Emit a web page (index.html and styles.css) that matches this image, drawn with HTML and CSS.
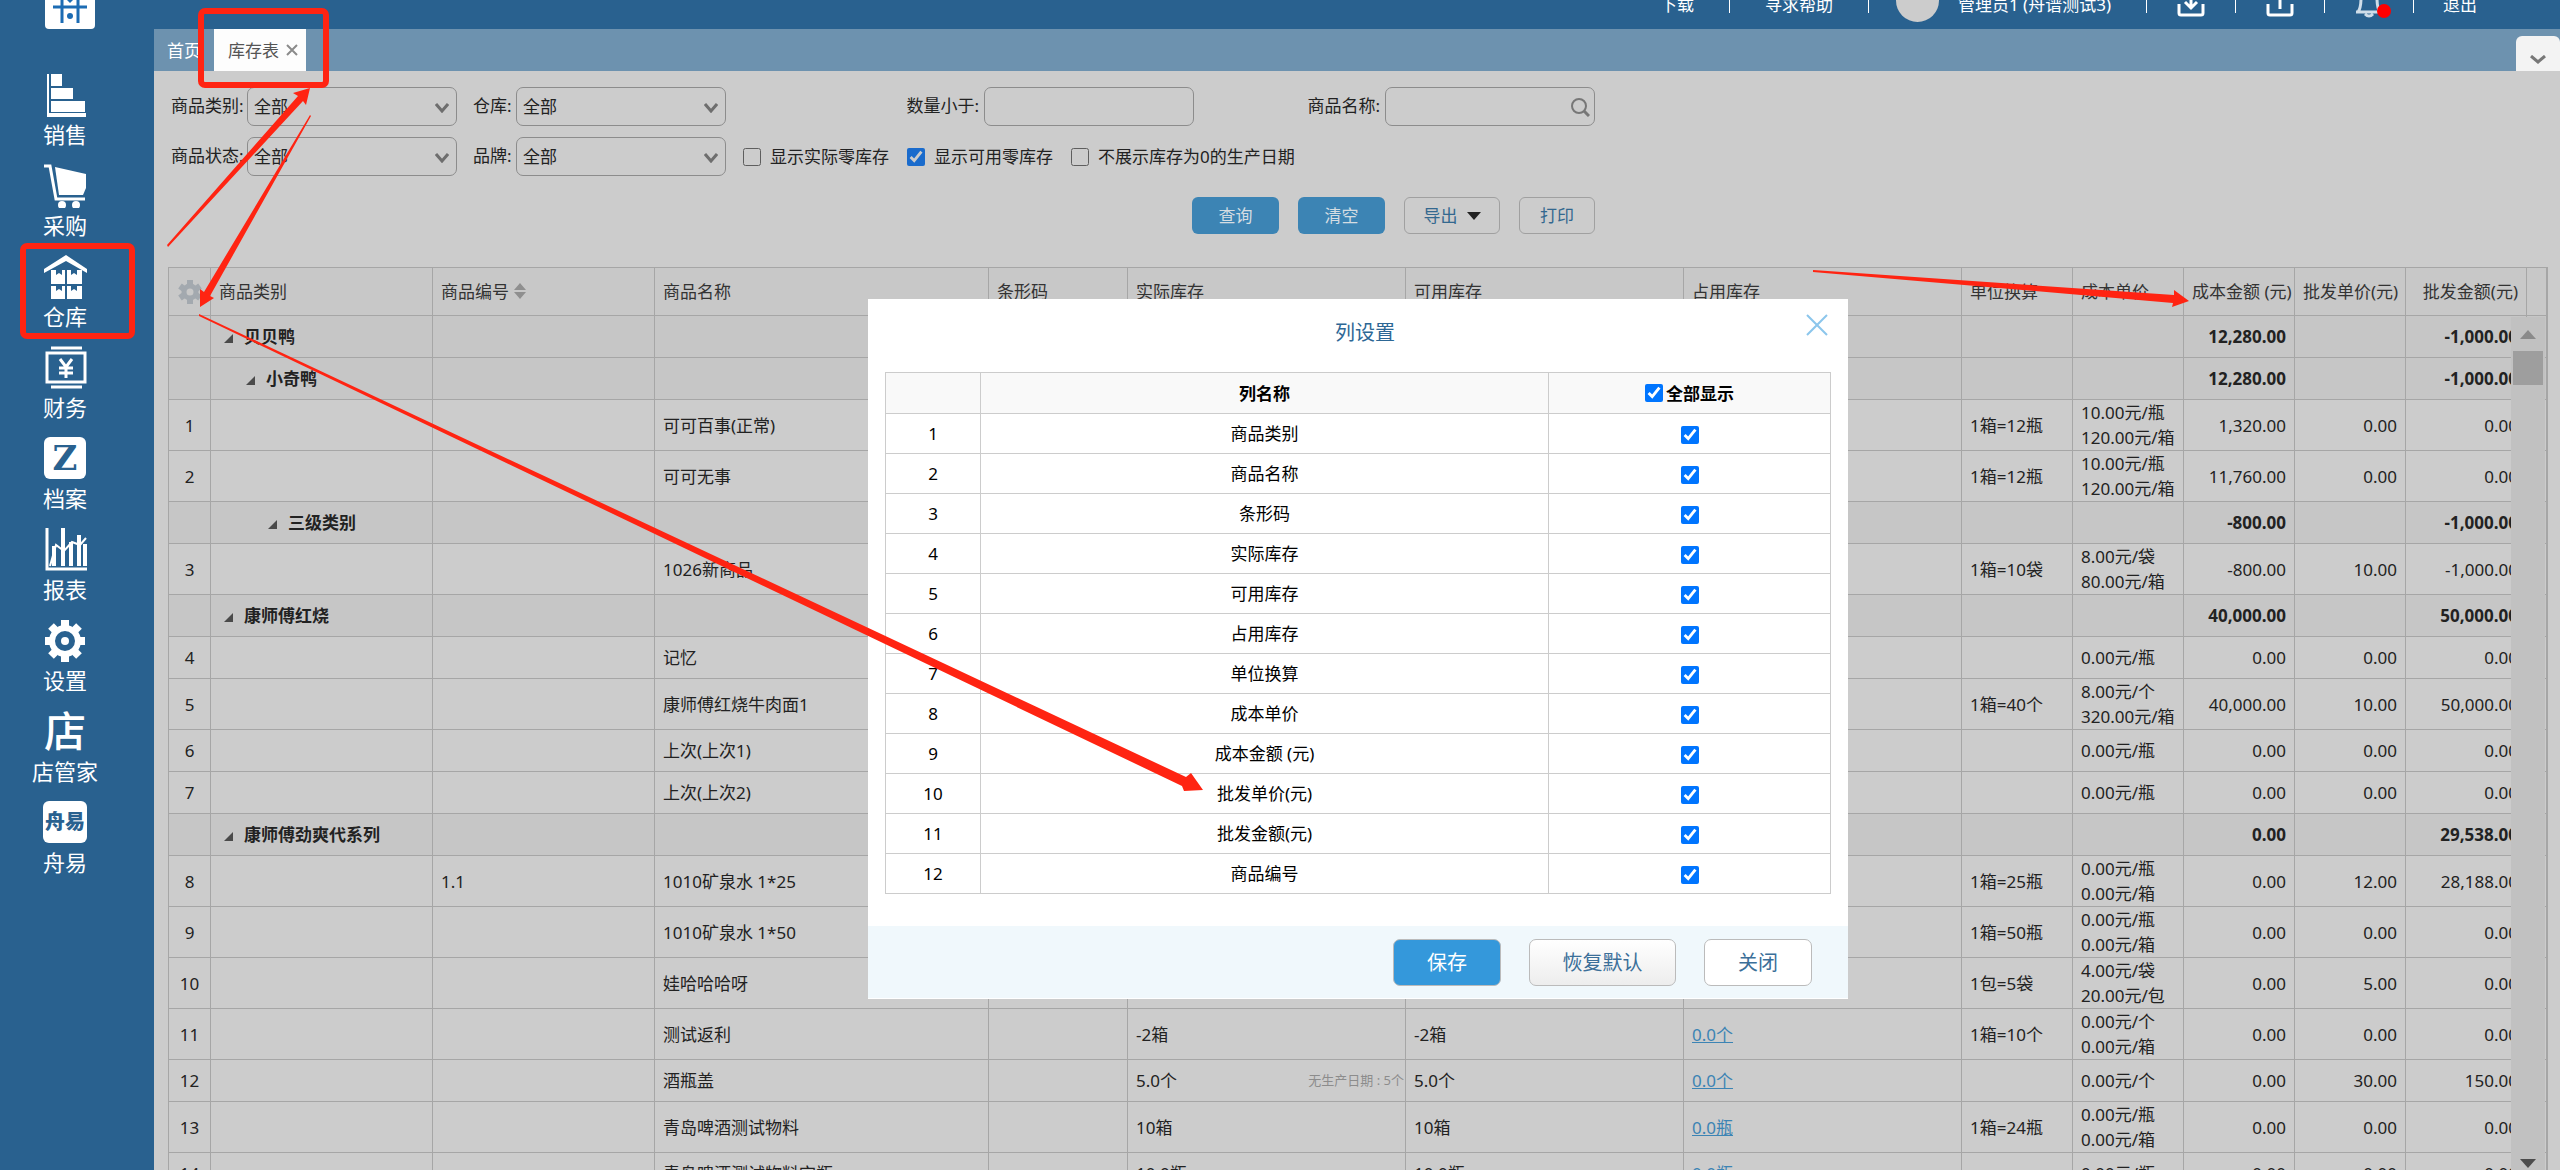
FILE: index.html
```html
<!DOCTYPE html>
<html lang="zh-CN">
<head>
<meta charset="utf-8">
<title>库存表</title>
<link rel="stylesheet" href="styles.css">
</head>
<body>
<div class="app">
  <aside class="sidebar">
    <div class="logo">
      <svg width="50" height="29" viewBox="0 0 50 29"><path d="M0 0h50v25a4 4 0 0 1-4 4H4a4 4 0 0 1-4-4z" fill="#fff"/><path d="M8 7h34M17 0v23M33 0v23" stroke="#1c6cb4" stroke-width="3" fill="none"/><circle cx="25" cy="16" r="3" fill="#1c6cb4"/><path d="M22 0h6l-3 3z" fill="#1c6cb4"/></svg>
    </div>
    <nav class="nav">
      <a class="nav-item" href="#"><svg width="46" height="46" viewBox="0 0 46 46"><path d="M5 3h2v41H5zM5 47V42h39v4H5zM9 3h11v12H9zM9 17h22v11H9zM9 30h34v11H9z" fill="#fff"/></svg><span>销售</span></a>
      <a class="nav-item" href="#"><svg width="46" height="46" viewBox="0 0 46 46"><path d="M2 4h6l6 33h29" fill="none" stroke="#fff" stroke-width="3"/><path d="M13 5l31 7v14l-3 7H17z" fill="#fff"/><circle cx="20" cy="43" r="4" fill="#fff"/><circle cx="34" cy="43" r="4" fill="#fff"/></svg><span>采购</span></a>
      <a class="nav-item" href="#"><svg width="46" height="46" viewBox="0 0 46 46"><path d="M2 16L24 2l21 14v4L24 8 2 20z" fill="#fff"/><path d="M9 17h5v5l3-2 3 2v-5h3v14H9zM25 17h4v5l3-2 3 2v-5h5v14H25zM9 33h5v5l3-2 3 2v-5h3v14H9zM25 33h4v5l3-2 3 2v-5h5v14H25z" fill="#fff"/></svg><span>仓库</span></a>
      <a class="nav-item" href="#"><svg width="46" height="46" viewBox="0 0 46 46"><path d="M9 4h31M9 43h31" stroke="#fff" stroke-width="3"/><rect x="5" y="9" width="38" height="29" fill="none" stroke="#fff" stroke-width="3"/><path d="M18 15l6 8 6-8M24 23v11M17 24h14M17 29h14" fill="none" stroke="#fff" stroke-width="3"/></svg><span>财务</span></a>
      <a class="nav-item" href="#"><b class="tile tile-z">Z</b><span>档案</span></a>
      <a class="nav-item" href="#"><svg width="46" height="46" viewBox="0 0 46 46"><path d="M5 2v41h40" fill="none" stroke="#fff" stroke-width="3"/><path d="M12 40V20M21 40V2M29 40V16M37 40V9M43 40V18" stroke="#fff" stroke-width="4"/><path d="M8 40l6-21 8 6 8-9 8 3 6-7" fill="none" stroke="#fff" stroke-width="2"/></svg><span>报表</span></a>
      <a class="nav-item" href="#"><svg width="46" height="46" viewBox="-23 -24 46 46"><circle r="13" fill="none" stroke="#fff" stroke-width="6"/><circle r="4" fill="#fff"/><path d="M0-21v6M0 21v-6M-20 0h6M20 0h-6M-14-15l4 4M14-15l-4 4M-14 15l4-4M14 15l-4-4" stroke="#fff" stroke-width="8"/></svg><span>设置</span></a>
      <a class="nav-item" href="#"><b class="tile tile-shop">店</b><span>店管家</span></a>
      <a class="nav-item" href="#"><b class="tile tile-zy">舟易</b><span>舟易</span></a>
    </nav>
  </aside>

  <div class="main">
    <header class="topbar">
      <div class="topbar-row">
        <a href="#">下载</a><i class="sep"></i>
        <a href="#">寻求帮助</a><i class="sep"></i>
        <span class="user"><i class="avatar"></i>管理员1 (舟谱测试3)</span><i class="sep"></i>
        <button class="icon-btn" aria-label="下载任务"><svg width="28" height="28" viewBox="0 0 28 28"><path d="M2 14v9q0 2 2 2h20q2 0 2-2v-9M14 4v13M8 12l6 6 6-6" fill="none" stroke="#fff" stroke-width="3"/></svg></button><i class="sep"></i>
        <button class="icon-btn" aria-label="上传任务"><svg width="28" height="28" viewBox="0 0 28 28"><path d="M2 14v9q0 2 2 2h20q2 0 2-2v-9M14 19V4M8 9l6-6 6 6" fill="none" stroke="#fff" stroke-width="3"/></svg></button><i class="sep"></i>
        <button class="icon-btn bell" aria-label="消息"><svg width="28" height="28" viewBox="0 0 28 28"><path d="M1 22h26M3 22q3-4 3-14 1-6 8-6t8 6q0 10 3 14M10 24q4 4 8 0" fill="none" stroke="#cfdde9" stroke-width="3"/></svg><i class="dot"></i></button><i class="sep"></i>
        <a class="exit" href="#">退出</a>
      </div>
    </header>

    <div class="tabs">
      <a class="tab" href="#">首页</a>
      <a class="tab active" href="#">库存表<svg width="12" height="12" viewBox="0 0 12 12"><path d="M1 1l10 10M11 1L1 11" stroke="#8b8b8b" stroke-width="2"/></svg></a>
      <button class="tab-more" aria-label="更多标签"><svg width="16" height="10" viewBox="0 0 16 10"><path d="M1 1l7 6 7-6" fill="none" stroke="#777" stroke-width="3"/></svg></button>
    </div>

    <form class="filters">
      <div class="field"><label for="cat">商品类别:</label><span class="select"><select id="cat"><option>全部</option></select><svg width="14" height="10" viewBox="0 0 14 10"><path d="M1 1l6 7 6-7" fill="none" stroke="#6e6e6e" stroke-width="3"/></svg></span></div>
      <div class="field"><label for="wh">仓库:</label><span class="select"><select id="wh"><option>全部</option></select><svg width="14" height="10" viewBox="0 0 14 10"><path d="M1 1l6 7 6-7" fill="none" stroke="#6e6e6e" stroke-width="3"/></svg></span></div>
      <div class="field end"><label for="qty">数量小于:</label><input class="text" id="qty" type="text"></div>
      <div class="field end"><label for="name">商品名称:</label><span class="select"><input class="text" id="name" type="text"><svg class="search" width="20" height="20" viewBox="0 0 20 20"><circle cx="9" cy="9" r="7" fill="none" stroke="#777" stroke-width="2"/><path d="M14 14l5 5" stroke="#777" stroke-width="3"/></svg></span></div>
      <div class="field"><label for="st">商品状态:</label><span class="select"><select id="st"><option>全部</option></select><svg width="14" height="10" viewBox="0 0 14 10"><path d="M1 1l6 7 6-7" fill="none" stroke="#6e6e6e" stroke-width="3"/></svg></span></div>
      <div class="field"><label for="br">品牌:</label><span class="select"><select id="br"><option>全部</option></select><svg width="14" height="10" viewBox="0 0 14 10"><path d="M1 1l6 7 6-7" fill="none" stroke="#6e6e6e" stroke-width="3"/></svg></span></div>
      <div class="checks">
        <label><input type="checkbox">显示实际零库存</label>
        <label><input type="checkbox" checked>显示可用零库存</label>
        <label><input type="checkbox">不展示库存为0的生产日期</label>
      </div>
      <div class="actions">
        <button type="button" class="btn primary">查询</button>
        <button type="button" class="btn primary">清空</button>
        <button type="button" class="btn wide">导出<svg width="14" height="8" viewBox="0 0 14 8"><path d="M0 0h14L7 8z" fill="#222"/></svg></button>
        <button type="button" class="btn small">打印</button>
      </div>
    </form>

    <div class="grid-wrap">
      <table class="grid">
        <colgroup><col class="c-no"><col class="c-cat"><col class="c-cat"><col><col class="c-bar"><col class="c-stock"><col class="c-stock"><col class="c-stock"><col class="c-num"><col class="c-num"><col class="c-num"><col class="c-num"><col class="c-last"><col class="c-gut"></colgroup>
        <thead>
          <tr><th class="no"><svg width="24" height="24" viewBox="-12 -12 24 24"><circle r="6" fill="none" stroke="#a3a9af" stroke-width="5"/><path d="M0-12v5M0 12V7M-10-6l4 3M10-6L6-3M-10 6l4-3M10 6L6 3" stroke="#a3a9af" stroke-width="6"/></svg></th><th>商品类别</th><th>商品编号<svg class="sort" width="12" height="16" viewBox="0 0 12 16"><path d="M0 7l6-7 6 7zM0 9h12l-6 7z" fill="#8f8f8f"/></svg></th><th>商品名称</th><th>条形码</th><th>实际库存</th><th>可用库存</th><th>占用库存</th><th>单位换算</th><th>成本单价</th><th class="r">成本金额 (元)</th><th class="r">批发单价(元)</th><th class="r">批发金额(元)</th><th></th></tr>
        </thead>
        <tbody>
          <tr class="g"><td></td><td class="l1"><i class="tri"></i>贝贝鸭</td><td></td><td></td><td></td><td></td><td></td><td></td><td></td><td></td><td class="r">12,280.00</td><td></td><td class="r">-1,000.00</td><td></td></tr>
          <tr class="g"><td></td><td class="l2"><i class="tri"></i>小奇鸭</td><td></td><td></td><td></td><td></td><td></td><td></td><td></td><td></td><td class="r">12,280.00</td><td></td><td class="r">-1,000.00</td><td></td></tr>
          <tr class="d"><td class="no">1</td><td></td><td></td><td>可可百事(正常)</td><td></td><td></td><td></td><td></td><td>1箱=12瓶</td><td>10.00元/瓶<br>120.00元/箱</td><td class="r">1,320.00</td><td class="r">0.00</td><td class="r">0.00</td><td></td></tr>
          <tr class="d"><td class="no">2</td><td></td><td></td><td>可可无事</td><td></td><td></td><td></td><td></td><td>1箱=12瓶</td><td>10.00元/瓶<br>120.00元/箱</td><td class="r">11,760.00</td><td class="r">0.00</td><td class="r">0.00</td><td></td></tr>
          <tr class="g"><td></td><td class="l3"><i class="tri"></i>三级类别</td><td></td><td></td><td></td><td></td><td></td><td></td><td></td><td></td><td class="r">-800.00</td><td></td><td class="r">-1,000.00</td><td></td></tr>
          <tr class="d"><td class="no">3</td><td></td><td></td><td>1026新商品</td><td></td><td></td><td></td><td></td><td>1箱=10袋</td><td>8.00元/袋<br>80.00元/箱</td><td class="r">-800.00</td><td class="r">10.00</td><td class="r">-1,000.00</td><td></td></tr>
          <tr class="g"><td></td><td class="l1"><i class="tri"></i>康师傅红烧</td><td></td><td></td><td></td><td></td><td></td><td></td><td></td><td></td><td class="r">40,000.00</td><td></td><td class="r">50,000.00</td><td></td></tr>
          <tr><td class="no">4</td><td></td><td></td><td>记忆</td><td></td><td></td><td></td><td></td><td></td><td>0.00元/瓶</td><td class="r">0.00</td><td class="r">0.00</td><td class="r">0.00</td><td></td></tr>
          <tr class="d"><td class="no">5</td><td></td><td></td><td>康师傅红烧牛肉面1</td><td></td><td></td><td></td><td></td><td>1箱=40个</td><td>8.00元/个<br>320.00元/箱</td><td class="r">40,000.00</td><td class="r">10.00</td><td class="r">50,000.00</td><td></td></tr>
          <tr><td class="no">6</td><td></td><td></td><td>上次(上次1)</td><td></td><td></td><td></td><td></td><td></td><td>0.00元/瓶</td><td class="r">0.00</td><td class="r">0.00</td><td class="r">0.00</td><td></td></tr>
          <tr><td class="no">7</td><td></td><td></td><td>上次(上次2)</td><td></td><td></td><td></td><td></td><td></td><td>0.00元/瓶</td><td class="r">0.00</td><td class="r">0.00</td><td class="r">0.00</td><td></td></tr>
          <tr class="g"><td></td><td class="l1"><i class="tri"></i>康师傅劲爽代系列</td><td></td><td></td><td></td><td></td><td></td><td></td><td></td><td></td><td class="r">0.00</td><td></td><td class="r">29,538.00</td><td></td></tr>
          <tr class="d"><td class="no">8</td><td></td><td>1.1</td><td>1010矿泉水 1*25</td><td></td><td></td><td></td><td></td><td>1箱=25瓶</td><td>0.00元/瓶<br>0.00元/箱</td><td class="r">0.00</td><td class="r">12.00</td><td class="r">28,188.00</td><td></td></tr>
          <tr class="d"><td class="no">9</td><td></td><td></td><td>1010矿泉水 1*50</td><td></td><td></td><td></td><td></td><td>1箱=50瓶</td><td>0.00元/瓶<br>0.00元/箱</td><td class="r">0.00</td><td class="r">0.00</td><td class="r">0.00</td><td></td></tr>
          <tr class="d"><td class="no">10</td><td></td><td></td><td>娃哈哈哈呀</td><td></td><td></td><td></td><td></td><td>1包=5袋</td><td>4.00元/袋<br>20.00元/包</td><td class="r">0.00</td><td class="r">5.00</td><td class="r">0.00</td><td></td></tr>
          <tr class="d"><td class="no">11</td><td></td><td></td><td>测试返利</td><td></td><td>-2箱</td><td>-2箱</td><td><a href="#">0.0个</a></td><td>1箱=10个</td><td>0.00元/个<br>0.00元/箱</td><td class="r">0.00</td><td class="r">0.00</td><td class="r">0.00</td><td></td></tr>
          <tr><td class="no">12</td><td></td><td></td><td>酒瓶盖</td><td></td><td class="tight"><div class="split"><span>5.0个</span><small>无生产日期 : 5个</small></div></td><td>5.0个</td><td><a href="#">0.0个</a></td><td></td><td>0.00元/个</td><td class="r">0.00</td><td class="r">30.00</td><td class="r">150.00</td><td></td></tr>
          <tr class="d"><td class="no">13</td><td></td><td></td><td>青岛啤酒测试物料</td><td></td><td>10箱</td><td>10箱</td><td><a href="#">0.0瓶</a></td><td>1箱=24瓶</td><td>0.00元/瓶<br>0.00元/箱</td><td class="r">0.00</td><td class="r">0.00</td><td class="r">0.00</td><td></td></tr>
          <tr><td class="no">14</td><td></td><td></td><td>青岛啤酒测试物料空瓶</td><td></td><td>10.0瓶</td><td>10.0瓶</td><td><a href="#">0.0瓶</a></td><td></td><td>0.00元/瓶</td><td class="r">0.00</td><td class="r">0.00</td><td class="r">0.00</td><td></td></tr>
        </tbody>
      </table>
      <div class="scroll"><i class="up"></i><i class="thumb"></i><i class="down"></i></div>
    </div>
  </div>
</div>

<div class="layer">
  <section class="modal" role="dialog" aria-labelledby="mt">
    <h2 id="mt">列设置</h2>
    <button class="close" aria-label="关闭窗口"><svg width="22" height="22" viewBox="0 0 22 22"><path d="M1 1l20 20M21 1L1 21" stroke="#8cc6ec" stroke-width="2"/></svg></button>
    <table class="cols">
      <colgroup><col class="m-no"><col><col class="m-chk"></colgroup>
      <thead><tr><th></th><th>列名称</th><th><label><input type="checkbox" checked>全部显示</label></th></tr></thead>
      <tbody>
        <tr><td>1</td><td>商品类别</td><td><input type="checkbox" checked aria-label="商品类别"></td></tr>
        <tr><td>2</td><td>商品名称</td><td><input type="checkbox" checked aria-label="商品名称"></td></tr>
        <tr><td>3</td><td>条形码</td><td><input type="checkbox" checked aria-label="条形码"></td></tr>
        <tr><td>4</td><td>实际库存</td><td><input type="checkbox" checked aria-label="实际库存"></td></tr>
        <tr><td>5</td><td>可用库存</td><td><input type="checkbox" checked aria-label="可用库存"></td></tr>
        <tr><td>6</td><td>占用库存</td><td><input type="checkbox" checked aria-label="占用库存"></td></tr>
        <tr><td>7</td><td>单位换算</td><td><input type="checkbox" checked aria-label="单位换算"></td></tr>
        <tr><td>8</td><td>成本单价</td><td><input type="checkbox" checked aria-label="成本单价"></td></tr>
        <tr><td>9</td><td>成本金额 (元)</td><td><input type="checkbox" checked aria-label="成本金额 (元)"></td></tr>
        <tr><td>10</td><td>批发单价(元)</td><td><input type="checkbox" checked aria-label="批发单价(元)"></td></tr>
        <tr><td>11</td><td>批发金额(元)</td><td><input type="checkbox" checked aria-label="批发金额(元)"></td></tr>
        <tr><td>12</td><td>商品编号</td><td><input type="checkbox" checked aria-label="商品编号"></td></tr>
      </tbody>
    </table>
    <footer>
      <button class="mbtn save">保存</button>
      <button class="mbtn reset">恢复默认</button>
      <button class="mbtn">关闭</button>
    </footer>
  </section>
</div>

<svg class="marks" width="2560" height="1170" viewBox="0 0 2560 1170">
  <g fill="none" stroke="#ff2412" stroke-width="6"><rect x="201" y="11" width="125" height="74" rx="4"/><rect x="23" y="246" width="109" height="90" rx="4"/></g>
  <g fill="#ff2412">
    <path d="M167 245L298 96l-5-3 17-5-4 17-3-4L168 247z"/>
    <path d="M310 115l1 1L210 296l4 2-14 9V289l4 3z"/>
    <path d="M199 314L1186 777l5-4 12 17-19 1-2-5L199 316z"/>
    <path d="M1813 270L2174 295v-5l15 11-17 6 1-4-360-31z"/>
  </g>
</svg>
</body>
</html>
```
FILE: styles.css
```css
* { box-sizing: border-box; }
html, body { height: 100%; }
body {
  margin: 0;
  overflow: hidden;
  background: #ccc;
  color: #222;
  font: 17px/25px "Noto Sans", "Noto Sans CJK SC", sans-serif;
}
a { color: inherit; text-decoration: none; }
button, input, select { font: inherit; color: inherit; }
button { padding: 0; cursor: pointer; }
svg { display: block; }

.app { display: flex; height: 100vh; }

/* sidebar */
.sidebar { flex: none; width: 154px; background: #29618f; color: #fff; }
.logo { height: 71px; padding-left: 45px; }
.nav { display: flex; flex-direction: column; width: 90px; margin-left: 20px; }
.nav-item { display: flex; flex-direction: column; align-items: center; height: 91px; font-size: 22px; line-height: 34px; white-space: nowrap; }
.tile { display: flex; align-items: center; justify-content: center; width: 42px; height: 42px; margin: 2px 0; border-radius: 6px; background: #fff; color: #29618f; line-height: 42px; }
.tile-z { font: bold 34px/40px "DejaVu Serif", serif; }
.tile-shop { background: none; color: #fff; font-size: 42px; font-weight: 500; }
.tile-zy { width: 44px; font-size: 20px; font-weight: 900; }

/* header */
.main { flex: 1; min-width: 0; display: flex; flex-direction: column; }
.topbar { flex: none; height: 29px; overflow: hidden; background: #29618f; color: #fff; }
.topbar-row { display: flex; align-items: center; justify-content: flex-end; gap: 35px; height: 50px; margin-top: -21px; padding-right: 83px; white-space: nowrap; }
.sep { width: 1px; height: 17px; background: #fff; }
.user { display: flex; align-items: center; margin-left: -8px; }
.avatar { width: 43px; height: 43px; margin: 0 19px 8px 0; border-radius: 50%; background: #ccc; }
.icon-btn { position: relative; margin: 0 -5px; border: 0; background: none; }
.exit { margin-left: -6px; }
.dot { position: absolute; right: -8px; bottom: 0; width: 14px; height: 14px; border-radius: 50%; background: #f00; }
.tabs { flex: none; display: flex; height: 42px; background: #6d92af; color: #fff; }
.tab { padding: 0 13px; line-height: 44px; }
.tab.active { display: flex; gap: 7px; padding: 0 8px 0 14px; background: #fdfdfd; color: #555; }
.tab.active svg { margin-top: 15px; }
.tab-more { display: flex; align-items: center; justify-content: center; width: 44px; height: 35px; margin: 7px 0 0 auto; padding-top: 13px; border: 0; border-radius: 6px 6px 0 0; background: #f3f3f3; }

/* filters */
.filters { flex: none; display: grid; grid-template-columns: 286px 253px 452px 385px; grid-auto-rows: 39px; gap: 11px 16px; padding: 16px 0 41px 17px; }
.field { display: flex; align-items: center; justify-content: space-between; }
.field.end { justify-content: flex-end; gap: 5px; }
.field label { padding-bottom: 3px; }
.select { position: relative; display: block; }
.select select, .text { display: block; width: 210px; height: 39px; padding: 0 6px; border: 1px solid #8c8c8c; border-radius: 7px; background: transparent; appearance: none; outline: 0; }
.select svg { position: absolute; right: 8px; top: 16px; pointer-events: none; }
.select svg.search { right: 5px; top: 10px; }
.checks { grid-column: 3 / 5; display: flex; align-items: center; gap: 18px; padding-left: 1px; }
.checks label { display: flex; align-items: center; gap: 9px; }
input[type="checkbox"] { width: 18px; height: 18px; margin: 0; }
.checks input { accent-color: #2086ff; filter: brightness(0.8); }
.actions { grid-column: 1 / 5; display: flex; justify-content: flex-end; gap: 19px; height: 37px; margin-top: 10px; }
.btn { display: flex; align-items: center; justify-content: center; gap: 9px; width: 87px; height: 37px; border: 1px solid #a0a0a0; border-radius: 6px; background: #ccc; color: #33688f; }
.btn.primary { border: 0; background: #3c84b4; color: #d5dde2; }
.btn.wide { width: 96px; }
.btn.small { width: 76px; }

/* stock table */
.grid-wrap { position: relative; flex: 1; min-height: 0; margin: 0 12px 0 14px; overflow: hidden; border: solid #a6a6a6; border-width: 1px 1px 0; }
.grid { width: 100%; border-spacing: 0; table-layout: fixed; }
.grid th, .grid td { height: 42px; padding: 0 8px; border: solid #a6a6a6; border-width: 0 1px 1px 0; text-align: left; white-space: nowrap; }
.grid th { height: 48px; background: #c8c8c8; font-weight: 400; color: #333; }
.grid .d td { height: 51px; }
.grid .g td { background: #c6c6c6; font-weight: 700; }
.grid .no { padding: 0; text-align: center; }
.grid .no svg { margin: 0 auto; }
.grid .r { text-align: right; }
.grid a { color: #3c84b4; text-decoration: underline; }
.grid .l1 { padding-left: 13px; }
.grid .l2 { padding-left: 35px; }
.grid .l3 { padding-left: 57px; }
.grid .tight { padding-right: 1px; }
.split { display: flex; justify-content: space-between; }
.split small { font-size: 13px; color: #8c8c8c; }
.tri { display: inline-block; margin-right: 11px; border: solid transparent; border-width: 0 0 9px 9px; border-bottom-color: #4a4a4a; }
.sort { display: inline-block; margin-left: 5px; vertical-align: -1px; }
.c-no { width: 42px; }
.c-cat { width: 222px; }
.c-bar { width: 139px; }
.c-stock { width: 278px; }
.c-num { width: 111px; }
.c-last { width: 121px; }
.c-gut { width: 20px; }
.scroll { position: absolute; top: 49px; right: 2px; bottom: 0; width: 34px; display: flex; flex-direction: column; align-items: center; background: #c1c1c1; }
.up { margin-top: 13px; border: 8px solid transparent; border-top: 0; border-bottom: 9px solid #8a8a8a; }
.thumb { width: 30px; height: 34px; margin-top: 12px; background: #9e9e9e; }
.down { margin: auto 0 2px; border: 8px solid transparent; border-bottom: 0; border-top: 9px solid #4c4c4c; }

/* column settings dialog */
.layer { position: fixed; inset: 0 0 0 156px; display: flex; justify-content: center; align-items: flex-start; padding-top: 299px; }
.modal { position: relative; width: 980px; padding-bottom: 1px; background: #fff; color: #000; }
.modal h2 { margin: 0; padding-left: 14px; height: 73px; font-size: 20px; font-weight: 400; line-height: 68px; text-align: center; color: #2d6795; }
.close { position: absolute; right: 20px; top: 15px; border: 0; background: none; }
.cols { width: 946px; margin: 0 17px 32px; border-collapse: collapse; table-layout: fixed; }
.cols th, .cols td { height: 40px; padding: 0; border: 1px solid #ccc; text-align: center; }
.cols th { height: 41px; background: #f9f9f9; }
.cols label { display: flex; align-items: center; justify-content: center; gap: 3px; }
.cols td input { display: block; margin: 3px auto 0; }
.m-no { width: 95px; }
.m-chk { width: 282px; }
.modal footer { display: flex; justify-content: flex-end; gap: 28px; padding: 13px 36px 12px; background: #f0f8fc; }
.mbtn { width: 108px; height: 47px; border: 1px solid #bbb; border-radius: 7px; background: #fff; color: #3b6f99; font-size: 20px; }
.mbtn.reset { width: 147px; background: linear-gradient(#fff, #ededed); }
.mbtn.save { background: #3498db; color: #fff; }

/* annotation arrows and boxes */
.marks { position: absolute; left: 0; top: 0; pointer-events: none; }
```
